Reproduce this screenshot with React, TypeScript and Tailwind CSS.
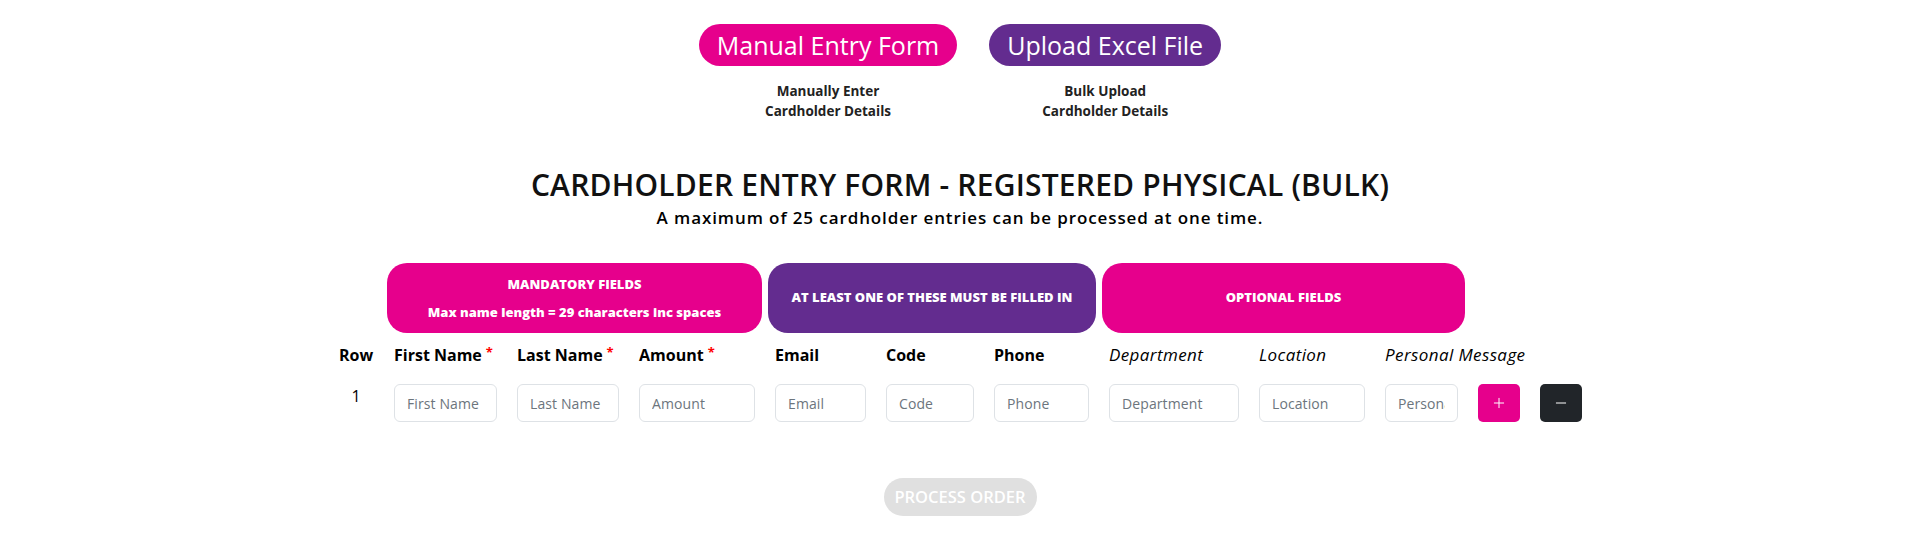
import React from 'react';
import { Plus, Minus } from 'lucide-react';

const PINK = 'bg-[#e6008c]';

const columns = [
  { label: 'First Name', required: true, placeholder: 'First Name' },
  { label: 'Last Name', required: true, placeholder: 'Last Name' },
  { label: 'Amount', required: true, placeholder: 'Amount' },
  { label: 'Email', placeholder: 'Email' },
  { label: 'Code', placeholder: 'Code' },
  { label: 'Phone', placeholder: 'Phone' },
  { label: 'Department', optional: true, placeholder: 'Department' },
  { label: 'Location', optional: true, placeholder: 'Location' },
  { label: 'Personal Message', optional: true, placeholder: 'Personal Message' },
];

const App: React.FC = () => {
  return (
    <div className="min-h-[543px] bg-white text-black font-['Open_Sans',sans-serif] flex flex-col items-center">
      {/* entry mode switch */}
      <div className="flex gap-[32px] mt-[24px]">
        <div className="flex flex-col items-center">
          <button className={`h-[42px] px-[18px] rounded-full ${PINK} text-white text-[25px] leading-none`}>
            Manual Entry Form
          </button>
          <p className="mt-[15px] text-[13.5px] leading-[20px] font-bold text-[#222] text-center">
            Manually Enter
            <br />
            Cardholder Details
          </p>
        </div>
        <div className="flex flex-col items-center">
          <button className="h-[42px] px-[18px] rounded-full bg-[#632c8f] text-white text-[25px] leading-none">
            Upload Excel File
          </button>
          <p className="mt-[15px] text-[13.5px] leading-[20px] font-bold text-[#222] text-center">
            Bulk Upload
            <br />
            Cardholder Details
          </p>
        </div>
      </div>

      <h1 className="mt-[46px] text-[30px] leading-[36px] font-semibold tracking-[0.2px] text-[#111]">
        CARDHOLDER ENTRY FORM - REGISTERED PHYSICAL (BULK)
      </h1>
      <p className="mt-[4px] text-[17px] leading-[22px] font-semibold tracking-[0.9px]">
        A maximum of 25 cardholder entries can be processed at one time.
      </p>

      <div className="mt-[34px] grid grid-cols-[36px_103px_102px_116px_91px_88px_95px_130px_106px_73px_42px_42px] gap-x-[20px]">
        {/* group headers */}
        <div />
        <div className={`col-span-3 mx-[-7px] h-[70px] rounded-[20px] ${PINK} text-white font-extrabold text-[13px] flex flex-col items-center justify-center gap-[12px] leading-[16px]`}>
          <span>MANDATORY FIELDS</span>
          <span>Max name length = 29 characters inc spaces</span>
        </div>
        <div className="col-span-3 mx-[-7px] h-[70px] rounded-[20px] bg-[#632c8f] text-white font-extrabold text-[13px] flex items-center justify-center">
          AT LEAST ONE OF THESE MUST BE FILLED IN
        </div>
        <div className={`col-span-3 mx-[-7px] h-[70px] rounded-[20px] ${PINK} text-white font-extrabold text-[13px] flex items-center justify-center`}>
          OPTIONAL FIELDS
        </div>
        <div />
        <div />

        {/* column labels */}
        <div className="mt-[10px] h-[24px] text-[16px] leading-[24px] font-bold text-center whitespace-nowrap">Row</div>
        {columns.map((c) => (
          <div
            key={c.label}
            className={`mt-[10px] h-[24px] leading-[24px] whitespace-nowrap ${c.optional ? 'italic font-normal text-[17px] tracking-[0.4px]' : 'font-bold text-[16px]'}`}
          >
            {c.label}
            {c.required && <span className="ml-[4px] text-[#ff0000] text-[13px] align-top leading-[18px]">*</span>}
          </div>
        ))}
        <div />
        <div />

        {/* row 1 */}
        <div className="mt-[17px] text-[16px] leading-[24px] text-center">1</div>
        {columns.map((c) => (
          <input
            key={c.label}
            type="text"
            placeholder={c.placeholder}
            className="mt-[17px] h-[38px] w-full min-w-0 rounded-[6px] border border-[#dee2e6] px-[12px] text-[14px] tracking-[0.1px] text-[#495057] placeholder:text-[#6c757d] outline-none"
          />
        ))}
        <button className={`mt-[17px] h-[38px] rounded-[5px] ${PINK} text-white flex items-center justify-center`}>
          <Plus size={16} strokeWidth={1.5} />
        </button>
        <button className="mt-[17px] h-[38px] rounded-[5px] bg-[#212529] text-white flex items-center justify-center">
          <Minus size={16} strokeWidth={1.5} />
        </button>
      </div>

      <button className="mt-[56px] h-[38px] w-[153px] rounded-full bg-[#e0e0e0] text-white text-[16.5px] font-semibold">
        PROCESS ORDER
      </button>
    </div>
  );
};

export default App;
